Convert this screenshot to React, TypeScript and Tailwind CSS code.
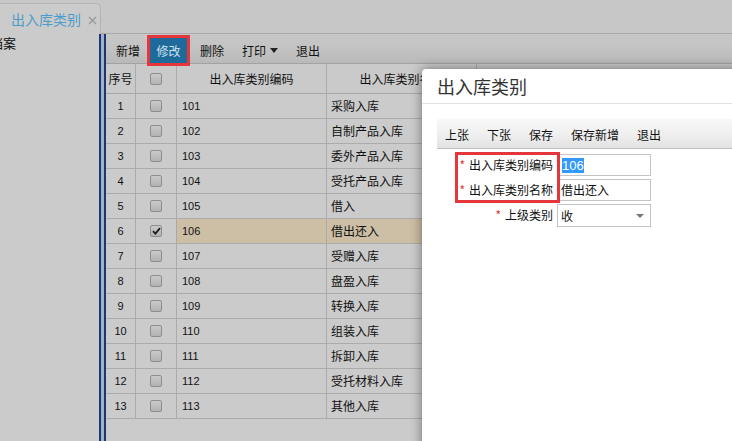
import React from "react";

const rows: [string, string, string][] = [
  ["1", "101", "采购入库"],
  ["2", "102", "自制产品入库"],
  ["3", "103", "委外产品入库"],
  ["4", "104", "受托产品入库"],
  ["5", "105", "借入"],
  ["6", "106", "借出还入"],
  ["7", "107", "受赠入库"],
  ["8", "108", "盘盈入库"],
  ["9", "109", "转换入库"],
  ["10", "110", "组装入库"],
  ["11", "111", "拆卸入库"],
  ["12", "112", "受托材料入库"],
  ["13", "113", "其他入库"],
];

function Box({ checked }: { checked?: boolean }) {
  return (
    <div className="w-[12px] h-[12px] rounded-[2px] border border-[#8e8e8e] bg-gradient-to-b from-[#cacaca] to-[#b2b2b2] flex items-center justify-center">
      {checked && (
        <svg width="9" height="8" viewBox="0 0 9 8">
          <path d="M1 4.2 L3.4 6.6 L8 1.2" stroke="#1e1e1e" strokeWidth="1.8" fill="none" />
        </svg>
      )}
    </div>
  );
}

const cjk = "font-['Noto_Sans_CJK_SC',sans-serif]";
const num = "font-['Liberation_Sans',sans-serif]";

export default function App() {
  return (
    <div className={`relative w-[732px] h-[441px] overflow-hidden bg-[#c7c7c7] text-[#111] text-[12px] ${cjk}`}>
      {/* tab bar */}
      <div className="h-[34px] flex border-b border-[#a9a9a9]">
        <div className="mt-[3px] h-[31px] w-[101px] -mb-px relative z-10 border-t border-r border-[#b3b3b3] rounded-tr-[5px] bg-[#cbcbcb] flex items-center pl-[11px]">
          <span className="text-[14px] leading-[18px] text-[#4b9bcb]">出入库类别</span>
          <svg className="ml-[7px] mt-[2px]" width="9" height="9" viewBox="0 0 9 9">
            <path d="M1 1 L8 8 M8 1 L1 8" stroke="#9a9a9a" strokeWidth="1.4" />
          </svg>
        </div>
        <div className="flex-1" />
      </div>

      {/* body */}
      <div className="flex h-[407px]">
        <div className="w-[99px] bg-[#cbcbcb] overflow-hidden">
          <div className="-ml-[10px] text-[13px] leading-[18px]">档案</div>
        </div>
        <div className="w-[2px] bg-[#1c3672]" />
        <div className="w-[3px] bg-[#a2b0c8]" />
        <div className="w-[2px] bg-[#1c3672]" />
        <div className="flex-1 flex flex-col bg-[#cbcbcb]">
          {/* toolbar */}
          <div className="h-[30px] shrink-0 border-b border-[#a2a2a2] bg-gradient-to-b from-[#c7c7c7] via-[#c3c3c3] to-[#b9b9b9] flex items-end pl-[2px] gap-[2px]">
            <div className="h-[25px] px-[8px] flex items-center">新增</div>
            <div className="relative z-20 h-[25px] w-[37px] flex items-center justify-center bg-[#1d6a9b] text-[#cfe1ee] outline-[3px] outline-solid outline-[#e5363b]">
              修改
            </div>
            <div className="h-[25px] px-[8px] ml-[3px] flex items-center">删除</div>
            <div className="h-[25px] px-[8px] flex items-center">
              打印
              <svg className="ml-[4px]" width="8" height="5" viewBox="0 0 8 5">
                <path d="M0 0 L8 0 L4 5 Z" fill="#222" />
              </svg>
            </div>
            <div className="h-[25px] px-[8px] flex items-center">退出</div>
          </div>

          {/* header */}
          <div className="h-[30px] shrink-0 flex border-b border-[#a8a8a8] bg-[#cacaca]">
            <div className="w-[30px] border-r border-[#ababab] flex items-center justify-center">序号</div>
            <div className="w-[41px] border-r border-[#ababab] flex items-center justify-center">
              <Box />
            </div>
            <div className="w-[150px] border-r border-[#ababab] flex items-center justify-center">出入库类别编码</div>
            <div className="w-[150px] border-r border-[#ababab] flex items-center justify-center">出入库类别名称</div>
            <div className="flex-1 flex items-center justify-center">上级类别</div>
          </div>

          {/* rows */}
          {rows.map(([n, code, name]) => {
            const sel = n === "6";
            return (
              <div key={n} className="h-[25px] shrink-0 flex border-b border-[#ababab]">
                <div className={`w-[30px] border-r border-[#ababab] flex items-center justify-center text-[11px] ${num}`}>{n}</div>
                <div className="w-[41px] border-r border-[#ababab] flex items-center justify-center">
                  <Box checked={sel} />
                </div>
                <div className={`w-[150px] border-r border-[#ababab] flex items-center pl-[5px] text-[11px] ${num} ${sel ? "bg-[#ccbfa6]" : ""}`}>{code}</div>
                <div className={`w-[150px] border-r border-[#ababab] flex items-center pl-[4px] ${sel ? "bg-[#ccbfa6]" : ""}`}>{name}</div>
                <div className={`flex-1 ${sel ? "bg-[#ccbfa6]" : ""}`} />
              </div>
            );
          })}
          <div className="flex-1" />
        </div>
      </div>

      {/* modal */}
      <div className="absolute left-[422px] top-[69px] w-[330px] h-[390px] bg-white rounded-[4px] shadow-[0_0_12px_rgba(0,0,0,0.45)]">
        <div className="h-[35px] border-b border-[#e2e2e2] pl-[15px] flex items-center text-[18px] text-[#333]">出入库类别</div>
        <div className="mt-[15px] ml-[15px] h-[30px] border-b border-[#bfbfbf] bg-gradient-to-b from-[#f8f8f8] via-[#f0f0f0] to-[#e2e2e2] flex items-center pt-[3px] pl-[8px] gap-[18px] text-[#111]">
          <span>上张</span>
          <span>下张</span>
          <span>保存</span>
          <span>保存新增</span>
          <span>退出</span>
        </div>
        <div className="mt-[5px] flex flex-col">
          <div className="h-[25px] flex items-start">
            <div className="ml-[15px] w-[116px] h-[22px] flex items-center justify-end">
              <span className="text-[#e2302f] mr-[4px]">*</span>出入库类别编码
            </div>
            <div className={`ml-[5px] w-[93px] h-[22px] border border-[#c4c4c4] flex items-center pl-[3px] text-[13px] ${num}`}>
              <span className="bg-[#3399ff] text-white leading-[15px]">106</span>
            </div>
          </div>
          <div className="h-[25px] flex items-start">
            <div className="ml-[15px] w-[116px] h-[22px] flex items-center justify-end">
              <span className="text-[#e2302f] mr-[4px]">*</span>出入库类别名称
            </div>
            <div className="ml-[5px] w-[93px] h-[22px] border border-[#c4c4c4] flex items-center pl-[2px]">借出还入</div>
          </div>
          <div className="h-[25px] flex items-start">
            <div className="ml-[15px] w-[116px] h-[22px] flex items-center justify-end">
              <span className="text-[#e2302f] mr-[4px]">*</span>上级类别
            </div>
            <div className="ml-[4px] w-[94px] h-[23px] border border-[#c4c4c4] flex items-center pl-[3px] pr-[6px]">
              <span className="flex-1">收</span>
              <svg width="8" height="4" viewBox="0 0 8 4">
                <path d="M0 0 L8 0 L4 4 Z" fill="#777" />
              </svg>
            </div>
          </div>
        </div>
        <div className="absolute left-[33px] top-[83px] w-[105px] h-[51px] border-[3px] border-[#e5363b]" />
      </div>
    </div>
  );
}
